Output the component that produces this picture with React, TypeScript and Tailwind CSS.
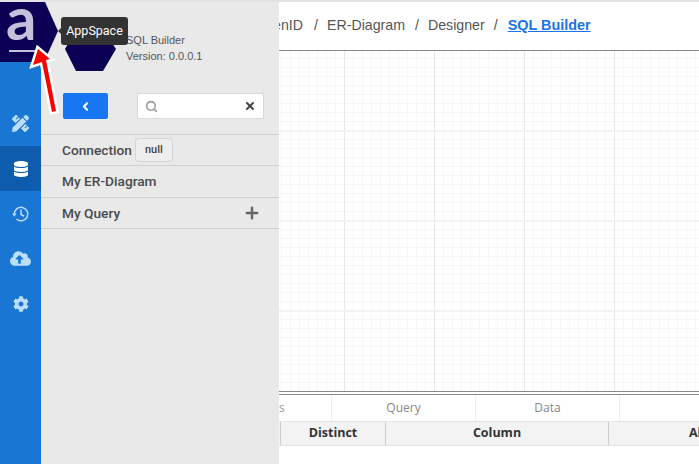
import { ChevronLeft, Plus, Search, X } from 'lucide-react';
import { FaCloudUploadAlt, FaCog, FaDatabase, FaPencilRuler } from 'react-icons/fa';

function Logo() {
  return (
    <div className="absolute left-0 top-[2px] h-[60px] w-[60px]">
      <svg width="60" height="60" viewBox="0 0 60 60" className="absolute left-0 top-0">
        <polygon points="0,0 45,0 58,29 44,60 0,60" fill="#0b0053" />
      </svg>
      <span className="absolute left-[6px] top-[-15px] font-['Lato',sans-serif] text-[60px] font-bold leading-[60px] text-[#c5c0dc]">a</span>
      <div className="absolute left-[9px] top-[48px] h-[2px] w-[27px] bg-[#c5c0dc]" />
    </div>
  );
}

function SideIcon({ children, active }: { children: React.ReactNode; active?: boolean }) {
  return (
    <div className={`flex h-[45px] w-full items-center justify-center ${active ? 'bg-[#0d5cad] text-white' : 'text-[#bbdefb]'}`}>
      {children}
    </div>
  );
}

function Row({ height, children }: { height: string; children: React.ReactNode }) {
  return <div className={`flex ${height} items-center border-b border-[#d0d0d0] pl-[21px] text-[13.7px] font-medium text-[#4a4a4a]`}>{children}</div>;
}

export default function App() {
  return (
    <div className="relative h-[464px] w-[699px] overflow-hidden bg-white font-['Roboto',sans-serif]">
      <div className="h-[2px] bg-[#e2e2e2]" />
      <div className="flex h-[462px]">
        <div className="flex w-[41px] shrink-0 flex-col bg-[#1976d2] pt-[99px]">
          <SideIcon><FaPencilRuler size={17} /></SideIcon>
          <SideIcon active><FaDatabase size={16} /></SideIcon>
          <SideIcon>
            <svg width="18" height="18" viewBox="0 0 20 20" fill="none" stroke="currentColor" strokeWidth="1.7">
              <path d="M2.6 10.5A7.5 7.5 0 1 1 5 15.6" />
              <path d="M10 5v5.5l3.5 2" />
              <polygon points="0.2,9.5 5,9.5 2.6,13" fill="currentColor" stroke="none" />
            </svg>
          </SideIcon>
          <SideIcon><FaCloudUploadAlt size={21} /></SideIcon>
          <SideIcon><FaCog size={16} /></SideIcon>
        </div>
        <div className="flex w-[238px] shrink-0 flex-col bg-[#e9e9e9]">
          <div className="h-[31px]" />
          <div className="flex h-[30px] flex-col pl-[85px] font-['Liberation_Sans',sans-serif] text-[11px] leading-[15.5px] text-[#555]">
            <span>SQL Builder</span>
            <span>Version: 0.0.0.1</span>
          </div>
          <div className="mt-[30px] flex items-center justify-between pl-[22px] pr-[15px]">
            <button className="flex h-[26px] w-[45px] items-center justify-center rounded-[2px] bg-[#1976f2] text-white">
              <ChevronLeft size={13} strokeWidth={4} />
            </button>
            <div className="flex h-[26px] w-[127px] items-center justify-between rounded-[2px] border border-[#d8d8d8] bg-white px-[7px]">
              <Search size={13} strokeWidth={2.8} className="text-[#999]" />
              <X size={12} strokeWidth={4} className="text-[#444]" />
            </div>
          </div>
          <div className="mt-[15px] border-t border-[#d0d0d0]">
            <Row height="h-[31px]">
              <span>Connection</span>
              <span className="ml-[3px] flex h-[24px] w-[38px] items-center justify-center rounded-[4px] border border-[#d4d4d4] bg-[#eeeeee] text-[11px] text-[#444]">null</span>
            </Row>
            <Row height="h-[32px]">My ER-Diagram</Row>
            <Row height="h-[31px]">
              <span className="flex-1">My Query</span>
              <Plus size={18} strokeWidth={3.2} className="mb-[1px] mr-[18px] text-[#666]" />
            </Row>
          </div>
        </div>
        <div className="flex min-w-0 flex-1 flex-col">
          <div className="flex h-[49px] items-center overflow-hidden whitespace-nowrap border-b border-[#888] font-['Liberation_Sans',sans-serif] text-[14.2px] text-[#555]">
            <span className="w-[24px] overflow-hidden"><span className="float-right">enID</span></span>
            <span className="ml-[11px] mr-[9px]">/</span>
            <span>ER-Diagram</span>
            <span className="ml-[10px] mr-[9px]">/</span>
            <span>Designer</span>
            <span className="ml-[9px] mr-[10px]">/</span>
            <span className="text-[14.4px] font-bold text-[#1a73e8] underline">SQL Builder</span>
          </div>
          <div className="h-[341px] border-b border-[#888] bg-[linear-gradient(#f3f3f3_2px,transparent_2px),linear-gradient(90deg,#e8e8e8_1px,transparent_1px),linear-gradient(#f7f7f7_1px,transparent_1px),linear-gradient(90deg,#f6f6f6_1px,transparent_1px)] bg-[size:90px_90px,90px_90px,9px_9px,9px_9px] bg-[position:65px_79px,65px_79px,2px_7px,2px_7px]" />
          <div className="mt-[2px] flex h-[28px] items-center border-y border-[#888] border-b-[#e4e4e4] font-['Open_Sans',sans-serif] text-[12px] text-[#888]">
            <div className="flex h-full w-[53px] items-center border-r border-[#eee] text-[#999]">s</div>
            <div className="flex h-full w-[144px] items-center justify-center border-r border-[#eee]">Query</div>
            <div className="flex h-full w-[144px] items-center justify-center border-r border-[#eee]">Data</div>
          </div>
          <div className="flex h-[24px] items-stretch overflow-hidden border-b border-[#e4e4e4] bg-[#f3f3f3] font-['Open_Sans',sans-serif] text-[12.5px] font-bold text-[#333]">
            <div className="w-[2px] shrink-0 border-r border-[#ccc]" />
            <div className="flex w-[105px] shrink-0 items-center justify-center border-r border-[#ccc]">Distinct</div>
            <div className="flex w-[223px] shrink-0 items-center justify-center border-r border-[#ccc]">Column</div>
            <div className="flex w-[190px] shrink-0 items-center justify-center">Alias</div>
          </div>
        </div>
      </div>

      <svg width="54" height="32" viewBox="0 0 54 32" className="absolute left-[64px] top-[40px]">
        <polygon points="1,9 6,0 46,0 52,9 39,31 12,31" fill="#0b0053" />
      </svg>
      <Logo />
      <div className="absolute left-[61px] top-[17px] flex h-[28px] w-[67px] items-center justify-center rounded-[3px] bg-[#333] text-[12.5px] text-white">AppSpace</div>
      <div className="absolute left-[58px] top-[28px] h-0 w-0 border-y-[3px] border-r-[3px] border-y-transparent border-r-[#333]" />

      {/* annotation arrow */}
      <svg width="40" height="80" viewBox="25 40 40 80" className="absolute left-[25px] top-[40px]">
        <polygon points="38,49 50,59 46,60 56,111 52,112 42,62 33,65" fill="#ff0000" stroke="#fff" strokeWidth="5" paintOrder="stroke" />
      </svg>
    </div>
  );
}
